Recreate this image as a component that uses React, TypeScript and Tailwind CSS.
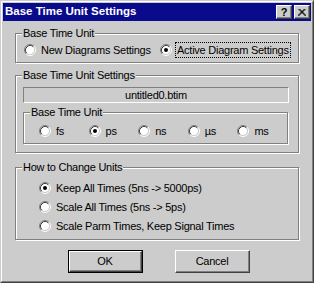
import React from "react";

const Radio = ({ checked }: { checked?: boolean }) => (
  <svg width="12" height="12" viewBox="0 0 12 12" className="shrink-0">
    <circle cx="6" cy="6" r="4.5" fill="#fff" />
    <path d="M2.11 9.89A5.5 5.5 0 0 1 9.89 2.11" fill="none" stroke="#808080" />
    <path d="M9.89 2.11A5.5 5.5 0 0 1 2.11 9.89" fill="none" stroke="#fff" />
    <path d="M2.82 9.18A4.5 4.5 0 0 1 9.18 2.82" fill="none" stroke="#404040" />
    <path d="M9.18 2.82A4.5 4.5 0 0 1 2.82 9.18" fill="none" stroke="#cccccc" />
    {checked && <circle cx="6" cy="6" r="2" fill="#000" />}
  </svg>
);

const Option = ({
  label,
  checked,
  focused,
}: {
  label: string;
  checked?: boolean;
  focused?: boolean;
}) => (
  <div className="flex h-[16px] items-center">
    <Radio checked={checked} />
    <span
      className={`ml-[3px] whitespace-nowrap border px-[1px] leading-[14px] ${
        focused ? "border-dotted border-black" : "border-transparent"
      }`}
    >
      {label}
    </span>
  </div>
);

const Group = ({
  label,
  className,
  children,
}: {
  label: string;
  className: string;
  children: React.ReactNode;
}) => (
  <div
    className={`relative border border-[#808080] shadow-[1px_1px_0_#fff,inset_1px_1px_0_#fff] ${className}`}
  >
    <span className="absolute -top-[7px] left-[6px] bg-[#cccccc] px-[1px] leading-[13px]">
      {label}
    </span>
    {children}
  </div>
);

const CaptionButton = ({ children }: { children: React.ReactNode }) => (
  <div className="flex h-[14px] w-[16px] items-center justify-center border border-t-white border-l-white border-r-[#404040] border-b-[#404040] bg-[#cccccc] shadow-[inset_-1px_-1px_0_#808080]">
    {children}
  </div>
);

export default function App() {
  return (
    <div
      className="h-[283px] w-[314px] border border-t-[#cccccc] border-l-[#cccccc] border-r-[#404040] border-b-[#404040] bg-[#cccccc] text-[11px] tracking-[-0.25px] text-black"
      style={{ fontFamily: '"Liberation Sans", Arial, sans-serif' }}
    >
      <div className="h-full border border-t-white border-l-white border-r-[#808080] border-b-[#808080] p-[1px]">
        <div className="flex h-[18px] items-center justify-between bg-[#0a0a8c] pl-[2px] pr-[1px]">
          <span className="text-[11.5px] font-bold tracking-normal text-white">Base Time Unit Settings</span>
          <div className="flex gap-[2px]">
            <CaptionButton>
              <span className="text-[11px] font-bold leading-none">?</span>
            </CaptionButton>
            <CaptionButton>
              <svg width="8" height="7" viewBox="0 0 8 7">
                <path d="M0.5 0 L7.5 7 M1.5 0 L8.5 7 M7.5 0 L0.5 7 M6.5 0 L-0.5 7" stroke="#000" strokeWidth="1" />
              </svg>
            </CaptionButton>
          </div>
        </div>

        <div className="ml-[12px] mt-[12px] flex flex-col">
          <Group label="Base Time Unit" className="h-[30px] w-[284px] pl-[8px] pt-[8px]">
            <div className="flex">
              <div className="w-[136px]">
                <Option label="New Diagrams Settings" />
              </div>
              <Option label="Active Diagram Settings" checked focused />
            </div>
          </Group>

          <Group label="Base Time Unit Settings" className="mt-[12px] h-[78px] w-[284px] pl-[7px] pt-[11px]">
            <div className="flex h-[16px] w-[266px] items-center justify-center border border-t-[#808080] border-l-[#808080] border-r-white border-b-white leading-[14px]">
              untitled0.btim
            </div>
            <Group label="Base Time Unit" className="mt-[9px] h-[32px] w-[265px] pl-[15px] pt-[10px]">
              <div className="flex">
                {["fs", "ps", "ns", "µs", "ms"].map((u) => (
                  <div key={u} className="w-[51px]">
                    <Option label={u} checked={u === "ps"} />
                  </div>
                ))}
              </div>
            </Group>
          </Group>

          <Group label="How to Change Units" className="mt-[14px] h-[73px] w-[284px] pl-[23px] pt-[12px]">
            <div className="flex flex-col gap-[3px]">
              <Option label="Keep All Times (5ns -> 5000ps)" checked />
              <Option label="Scale All Times (5ns -> 5ps)" />
              <Option label="Scale Parm Times, Keep Signal Times" />
            </div>
          </Group>
        </div>

        <div className="mt-[10px] flex justify-center gap-[32px] pl-[3px]">
          <button className="h-[23px] w-[75px] border border-black bg-[#cccccc]">
            <div className="flex h-full items-center justify-center border border-t-white border-l-white border-r-[#404040] border-b-[#404040] shadow-[inset_-1px_-1px_0_#808080]">
              OK
            </div>
          </button>
          <button className="flex h-[23px] w-[75px] items-center justify-center border border-t-white border-l-white border-r-[#404040] border-b-[#404040] bg-[#cccccc] shadow-[inset_-1px_-1px_0_#808080]">
            Cancel
          </button>
        </div>
      </div>
    </div>
  );
}
